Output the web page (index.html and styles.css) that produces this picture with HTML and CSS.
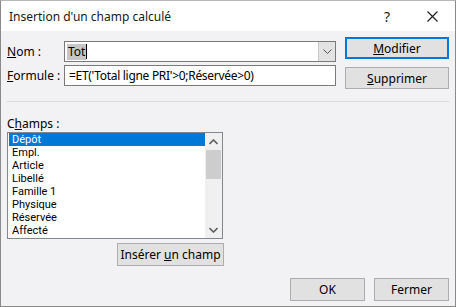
FILE: index.html
```html
<!DOCTYPE html>
<html>
	<head>
		<title>Insertion d'un champ calculé</title>
		<link rel="stylesheet" href="styles.css">
	</head>
<body>
	<div class="window">
		<!-- Title bar with help and close glyphs -->
		<div class="titlebar">
			<span class="title">Insertion d'un champ calculé</span>
			<span class="help">?</span>
			<span class="close">
				<svg width="11" height="11" viewBox="0 0 11 11"><path d="M0.5 0.5 L10.5 10.5 M10.5 0.5 L0.5 10.5" stroke="#1a1a1a" stroke-width="1.1" fill="none"/></svg>
			</span>
		</div>

		<div class="content">
			<div class="top">
				<div class="fields">
					<div class="row">
						<label class="lbl"><u>N</u>om :</label>
						<div class="input combo">
							<span class="value"><span class="sel">Tot</span><span class="caret"></span></span>
							<span class="drop">
								<svg width="9" height="5" viewBox="0 0 9 5"><path d="M0.5 0.5 L4.5 4.5 L8.5 0.5" stroke="#555" fill="none"/></svg>
							</span>
						</div>
					</div>
					<div class="row">
						<label class="lbl"><u>F</u>ormule :</label>
						<div class="input"><span class="value formula">=ET('Total ligne PRI'&gt;0;Réservée&gt;0)</span></div>
					</div>
				</div>
				<div class="side">
					<button class="btn default"><u>M</u>odifier</button>
					<button class="btn"><u>S</u>upprimer</button>
				</div>
			</div>

			<div class="sep"></div>

			<div class="champs-label">C<u>h</u>amps :</div>
			<div class="list">
				<ul class="items">
					<li class="active">Dépôt</li>
					<li>Empl.</li>
					<li>Article</li>
					<li>Libellé</li>
					<li>Famille 1</li>
					<li>Physique</li>
					<li>Réservée</li>
					<li>Affecté</li>
				</ul>
				<div class="scrollbar">
					<span class="arrow">
						<svg width="9" height="6" viewBox="0 0 9 6"><path d="M0.5 5 L4.5 1 L8.5 5" stroke="#606060" stroke-width="1.6" fill="none"/></svg>
					</span>
					<span class="track"><span class="thumb"></span></span>
					<span class="arrow">
						<svg width="9" height="6" viewBox="0 0 9 6"><path d="M0.5 1 L4.5 5 L8.5 1" stroke="#606060" stroke-width="1.6" fill="none"/></svg>
					</span>
				</div>
			</div>
			<div class="insert-row">
				<button class="btn insert">Insérer <u>u</u>n champ</button>
			</div>

			<div class="footer">
				<button class="btn small">OK</button>
				<button class="btn small">Fermer</button>
			</div>
		</div>
	</div>
</body>
</html>
```

FILE: styles.css
```css
html, body {
	margin: 0px;
	padding: 0px;
}
body {
	font-family: 'Noto Sans', 'Open Sans', sans-serif;
	font-size: 12px;
	color: #000;
	background-color: #fff;
}
.window {
	width: 456px;
	height: 307px;
	box-sizing: border-box;
	border: 1px solid #8a8a8a;
	border-top-color: #b8b8b8;
	background-color: #f2f1f4;
	display: flex;
	flex-direction: column;
}
.titlebar {
	height: 30px;
	background-color: #fff;
	display: flex;
	align-items: center;
	padding-left: 8px;
}
.title {
	flex: 1;
	font-size: 12px;
	color: #1a1a1a;
}
.help {
	font-size: 14px;
	width: 20px;
	margin-right: 23px;
	color: #1a1a1a;
}
.close {
	width: 28px;
	display: flex;
}
.content {
	flex: 1;
	padding: 6px 6px 0 6px;
	display: flex;
	flex-direction: column;
}
.top {
	display: flex;
	gap: 9px;
}
.fields {
	width: 329px;
	padding-top: 4px;
	display: flex;
	flex-direction: column;
	gap: 3px;
}
.row {
	display: flex;
	align-items: center;
	height: 21px;
}
.lbl {
	width: 57px;
}
.input {
	flex: 1;
	height: 21px;
	box-sizing: border-box;
	border: 1px solid #7a7a7a;
	background-color: #fff;
	display: flex;
	align-items: center;
	padding-left: 2px;
}
.value {
	flex: 1;
	display: flex;
	align-items: center;
	white-space: nowrap;
}
.formula {
	padding-left: 2px;
	letter-spacing: -0.3px;
}
.sel {
	background-color: #c6c6c6;
	line-height: 16px;
	padding: 0 1px;
}
.caret {
	width: 1px;
	height: 15px;
	background-color: #000;
}
.combo {
	padding-right: 0;
}
.drop {
	width: 16px;
	height: 19px;
	background-color: #e3e3e3;
	border-left: 1px solid #c8c8c8;
	display: flex;
	align-items: center;
	justify-content: center;
}
.side {
	width: 104px;
	display: flex;
	flex-direction: column;
	gap: 8px;
}
.btn {
	font-family: inherit;
	font-size: 12px;
	color: #000;
	background-color: #e1e1e1;
	border: 1px solid #adadad;
	height: 22px;
	padding: 0;
	box-sizing: border-box;
}
.btn.default {
	border: 2px solid #0078d7;
}
.sep {
	height: 1px;
	background-color: #d9d9d9;
	margin-top: 12px;
}
.champs-label {
	margin-top: 14px;
	line-height: 16px;
}
.list {
	margin-top: 0px;
	width: 216px;
	height: 107px;
	box-sizing: border-box;
	border: 1px solid #828790;
	background-color: #fff;
	display: flex;
}
.items {
	list-style: none;
	margin: 0;
	padding: 0;
	flex: 1;
	font-family: Roboto, 'Liberation Sans', sans-serif;
	font-size: 11px;
}
.items li {
	height: 13px;
	line-height: 13px;
	padding-left: 3px;
	margin-left: 1px;
}
.items li.active {
	background-color: #0078d7;
	color: #fff;
}
.scrollbar {
	width: 17px;
	background-color: #f0f0f0;
	display: flex;
	flex-direction: column;
}
.arrow {
	height: 17px;
	display: flex;
	align-items: center;
	justify-content: center;
}
.track {
	flex: 1;
	padding: 0 1px;
}
.thumb {
	display: block;
	height: 29px;
	background-color: #cdcdcd;
}
.insert-row {
	width: 217px;
	display: flex;
	justify-content: flex-end;
	margin-top: 4px;
}
.btn.insert {
	width: 107px;
	height: 23px;
}
.footer {
	display: flex;
	justify-content: flex-end;
	gap: 9px;
	margin-top: 12px;
}
.btn.small {
	width: 75px;
	height: 23px;
}
```
